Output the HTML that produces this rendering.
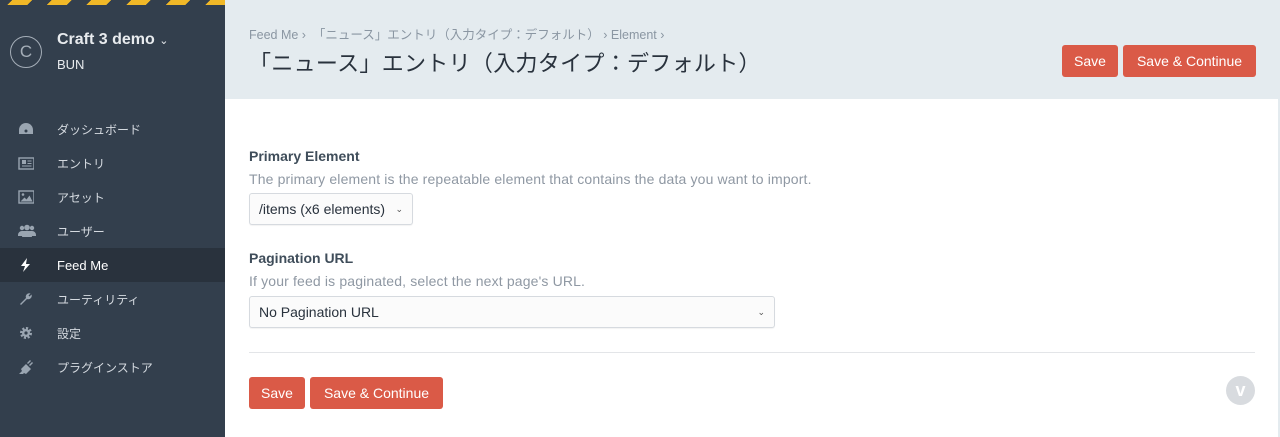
<!DOCTYPE html>
<html><head><meta charset="utf-8"><style>
*{box-sizing:border-box;margin:0;padding:0}
body{width:1280px;height:437px;overflow:hidden;font-family:"Liberation Sans","Noto Sans CJK JP",sans-serif;background:#fff;position:relative}
#side{position:absolute;left:0;top:0;width:225px;height:437px;background:#333f4d;color:#fff}
#stripe{position:absolute;left:0;top:0;width:225px;height:5px;background:repeating-linear-gradient(-45deg,#f1b827 0 14px,#333f4d 14px 28px)}
.logo{position:absolute;left:10px;top:36px;width:32px;height:32px;border:1px solid #a5aeb8;border-radius:50%;color:#a5aeb8;font-size:17px;text-align:center;line-height:30px}
.site{position:absolute;left:57px;top:31px;font-size:16px;font-weight:bold;color:#e8ebee}
.sub{position:absolute;left:57px;top:57px;font-size:13px;color:#e8ebee}
.nav{position:absolute;left:0;width:225px;height:34px;font-size:12px;color:#d5dae0;line-height:34px}
.nav span{position:absolute;left:57px;top:1px}
.nav i{position:absolute;left:18px;top:10px;width:18px;height:14px;display:block;line-height:0}
.nav i svg{display:block}
.nav.on{background:#29323d;color:#fff;font-size:13px}
#head{position:absolute;left:225px;top:0;width:1055px;height:99px;background:#e4ebef}
.crumb{position:absolute;left:24px;top:24px;font-size:12.5px;color:#8a96a2}
h1{position:absolute;left:24px;top:46px;font-size:22px;font-weight:normal;color:#29323d;letter-spacing:.3px}
.btn{position:absolute;height:32px;background:#da5a47;color:#fff;font-size:14px;line-height:32px;text-align:center;border-radius:3px}
.lbl{position:absolute;left:249px;font-size:14px;font-weight:bold;color:#3f4d5a}
.ins{position:absolute;left:249px;font-size:14px;color:#8f98a3;letter-spacing:.15px}
.sel{position:absolute;left:249px;height:32px;border:1px solid #d6dadf;border-radius:3px;font-size:14px;color:#29323d;line-height:30px;padding-left:9px;background:#fbfbfb;box-shadow:0 1px 1px rgba(0,0,0,.05)}
.sel b{position:absolute;right:9px;top:0;font-weight:normal;font-size:9px;color:#555}
</style></head><body>
<div id="side">
<div id="stripe"></div>
<div class="logo">C</div>
<div class="site">Craft 3 demo <span style="font-size:11px;font-weight:normal">&#8964;</span></div>
<div class="sub">BUN</div>
<div class="nav" style="top:112px"><i><svg width="16" height="14" viewBox="0 0 16 14"><path d="M8 1A7 7 0 0 0 1 8v4h14V8A7 7 0 0 0 8 1z" fill="#9aa5b1"/><circle cx="8" cy="9" r="1.5" fill="#333f4d"/></svg></i><span>ダッシュボード</span></div>
<div class="nav" style="top:146px"><i><svg width="16" height="14" viewBox="0 0 16 14"><rect x="1" y="2" width="15" height="11" fill="none" stroke="#9aa5b1" stroke-width="1.4"/><rect x="4" y="4" width="4" height="4" fill="#9aa5b1"/><path d="M9.5 5h4M9.5 7.5h4M4 10h9.5" stroke="#9aa5b1"/></svg></i><span>エントリ</span></div>
<div class="nav" style="top:180px"><i><svg width="16" height="14" viewBox="0 0 16 14"><rect x="1" y="1" width="15" height="12" fill="none" stroke="#9aa5b1" stroke-width="1.4"/><path d="M2.5 11.5l4-4 2 2 3-4 3 6z" fill="#9aa5b1"/><circle cx="5" cy="4.5" r="1.3" fill="#9aa5b1"/></svg></i><span>アセット</span></div>
<div class="nav" style="top:214px"><i><svg width="18" height="14" viewBox="0 0 18 14"><circle cx="4" cy="4" r="2.2" fill="#9aa5b1"/><circle cx="14" cy="4" r="2.2" fill="#9aa5b1"/><circle cx="9" cy="3.5" r="2.8" fill="#9aa5b1"/><path d="M0 11a4 4 0 0 1 4-4h10a4 4 0 0 1 4 4v1H0z M4 13a5 5 0 0 1 10 0z" fill="#9aa5b1"/></svg></i><span>ユーザー</span></div>
<div class="nav on" style="top:248px"><i><svg width="16" height="14" viewBox="0 0 16 14"><path d="M9 0L3 8h4l-2 6 7-8H8z" fill="#fff"/></svg></i><span>Feed Me</span></div>
<div class="nav" style="top:282px"><i><svg width="16" height="14" viewBox="0 0 16 14"><path d="M2 12l6-6a3.5 3.5 0 0 1 4.5-4.5L10.5 3.5l1 1L13.5 2.5A3.5 3.5 0 0 1 9 7l-6 6z" fill="#9aa5b1"/></svg></i><span>ユーティリティ</span></div>
<div class="nav" style="top:316px"><i><svg width="16" height="14" viewBox="0 0 16 14"><circle cx="8" cy="7" r="4.5" fill="none" stroke="#9aa5b1" stroke-width="3" stroke-dasharray="2 1.5"/><circle cx="8" cy="7" r="4" fill="#9aa5b1"/><circle cx="8" cy="7" r="1.6" fill="#333f4d"/></svg></i><span>設定</span></div>
<div class="nav" style="top:350px"><i><svg width="16" height="14" viewBox="0 0 16 14"><path d="M1 14l3-3-1-2 5-5 5 5-5 5-2-1-3 3z M9 3l3-3 1 1-3 3z M11 5l3-3 1 1-3 3z" fill="#9aa5b1"/></svg></i><span>プラグインストア</span></div>
</div>
<div id="head">
<div class="crumb">Feed Me ›&nbsp; 「ニュース」エントリ（入力タイプ：デフォルト）&nbsp;› Element ›</div>
<h1>「ニュース」エントリ（入力タイプ：デフォルト）</h1>
</div>
<div class="btn" style="left:1062px;top:45px;width:56px">Save</div>
<div class="btn" style="left:1123px;top:45px;width:133px">Save &amp; Continue</div>
<div class="lbl" style="top:148px">Primary Element</div>
<div class="ins" style="top:171px">The primary element is the repeatable element that contains the data you want to import.</div>
<div class="sel" style="top:193px;width:164px">/items (x6 elements)<b>&#8964;</b></div>
<div class="lbl" style="top:250px">Pagination URL</div>
<div class="ins" style="top:273px">If your feed is paginated, select the next page's URL.</div>
<div class="sel" style="top:296px;width:526px">No Pagination URL<b>&#8964;</b></div>
<div style="position:absolute;left:249px;top:352px;width:1006px;height:1px;background:#e3e5e8"></div>
<div class="btn" style="left:249px;top:377px;width:56px">Save</div>
<div class="btn" style="left:310px;top:377px;width:133px">Save &amp; Continue</div>
<div style="position:absolute;left:1226px;top:376px;width:29px;height:29px;border-radius:50%;background:#d8dbdf;color:#fff;font-weight:bold;font-size:18px;text-align:center;line-height:29px">v</div>
<div style="position:absolute;left:1278px;top:99px;width:2px;height:338px;background:#e4ebef"></div>
</body></html>
